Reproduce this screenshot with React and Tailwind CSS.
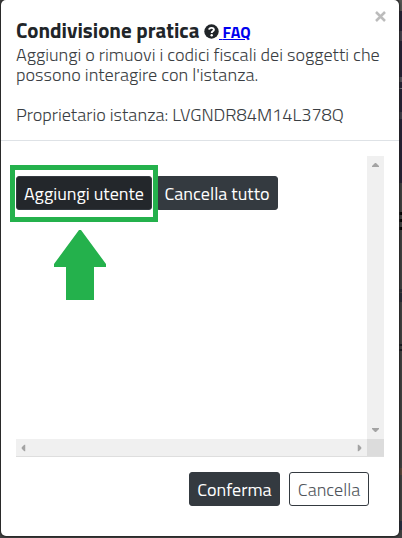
function Line({ children, className = '' }) {
  return <div className={'w-max text-[18.2px] leading-5 font-light whitespace-pre text-[#3a3e43] ' + className}>{children}</div>;
}

function Button({ children, className = '' }) {
  return (
    <button
      className={
        'flex h-[34px] shrink-0 items-center justify-center rounded-[3px] border border-[#343a40] pb-px text-[18.1px] leading-6 whitespace-nowrap ' +
        className
      }
    >
      {children}
    </button>
  );
}

function Triangle({ className = '' }) {
  return (
    <svg className={'h-1 w-[7px] fill-[#a3a3a3] ' + className} viewBox="0 0 7 4">
      <path d="M3 0h1L7 3v1H0V3z" />
    </svg>
  );
}

function Backdrop() {
  return (
    <div className="flex h-[538px] w-[4px] shrink-0 flex-col bg-[#414141]">
      <div className="h-[11px] bg-[#555653]" />
      <div className="h-[172px] bg-[#252135] pt-[20px]">
        <div className="h-[10px] w-[3px] bg-[#45424d]" />
        <div className="mt-[36px] h-[5px] bg-[#55535c]" />
        <div className="mt-[6px] h-px bg-[#77747c]" />
        <div className="mt-[23px] h-[7px] bg-[#403e48]" />
      </div>
      <div className="mt-[29px] h-[3px] bg-black" />
      <div className="mt-[4px] h-[3px] bg-black" />
      <div className="mt-[5px] h-[3px] bg-black" />
      <div className="mt-[59px] h-[3px] bg-[#292c35]" />
      <div className="mt-px h-[9px] bg-[#262a36]" />
      <div className="mt-[42px] h-[2px] bg-[#171920]" />
      <div className="mt-[3px] h-[2px] bg-[#171920]" />
      <div className="mt-[117px] h-[7px] w-[3px] bg-[#5b4639]" />
      <div className="mt-[46px] h-[9px] w-[3px] bg-[#242c42]" />
    </div>
  );
}

export default function App() {
  return (
    <div className="flex h-[538px] w-[402px] overflow-hidden bg-[#414141] font-['Titillium_Web','Open_Sans',sans-serif] text-[#212529]">
      <div className="relative ml-px flex h-[536px] w-[398px] shrink-0 flex-col rounded-[5px] bg-white shadow-[0_0_2px_1px_#222]">
        <header className="flex h-[141px] shrink-0 flex-col border-b border-[#dee2e6] pt-[19px] pl-[15px]">
          <div className="flex h-[24px] items-center">
            <h1 className="mb-0.5 w-[188px] shrink-0 text-[21px] leading-6 font-bold whitespace-nowrap">Condivisione pratica</h1>
            <svg className="mt-px h-[15px] w-[15px] shrink-0" viewBox="0 0 15 15">
              <circle cx="7.5" cy="7.5" r="7.2" fill="#212529" />
              <path d="M5.1 5.7C5.3 3.2 9.9 3.2 9.9 5.8C9.9 7.3 7.7 7.4 7.7 8.9" fill="none" stroke="white" strokeWidth="1.9" />
              <circle cx="7.7" cy="11.3" r="1.2" fill="white" />
            </svg>
            <a className="mt-px text-[16px] leading-6 font-bold whitespace-pre text-[#0000ee] underline">
              {' '}FAQ
            </a>
          </div>
          <Line className="mt-px">Aggiungi o rimuovi i codici fiscali dei soggetti che</Line>
          <Line>possono interagire con l'istanza.</Line>
          <Line className="mt-5">Proprietario istanza: LVGNDR84M14L378Q</Line>
        </header>

        <svg className="absolute top-[11px] left-[374px] h-[11px] w-[11px]" viewBox="0 0 11 11">
          <path d="M1 1L10 10M10 1L1 10" stroke="#bcbcbc" strokeWidth="2.5" />
        </svg>

        <main className="mt-[15px] ml-[15px] flex h-[301px] w-[368px] shrink-0 flex-col border-b border-[#dedede]">
          <div className="flex h-[283px] justify-between">
            <div className="flex gap-1 pt-5">
              <div className="relative h-[34px]">
                <Button className="w-[136px] bg-[#23272b] text-white">Aggiungi utente</Button>
                <div className="absolute -top-[11px] -left-[6px] z-10 h-[57px] w-[148px] border-[5px] border-[#24b14c]" />
                <svg className="absolute top-[54px] left-[38px] h-[70px] w-[52px]" viewBox="0 0 52 70">
                  <path d="M25 0h2l25 34v3H40v33H12V37H0v-3z" fill="#24b14c" />
                </svg>
              </div>
              <Button className="w-[122px] bg-[#343a40] text-white">Cancella tutto</Button>
            </div>
            <div className="flex w-[17px] flex-col items-center justify-between bg-[#f0f0f0] pt-[7px] pb-[7px]">
              <Triangle />
              <Triangle className="rotate-180" />
            </div>
          </div>
          <div className="flex h-[17px] bg-[#f0f0f0]">
            <div className="flex flex-1 items-center justify-between px-[4px]">
              <Triangle className="-rotate-90" />
              <Triangle className="rotate-90" />
            </div>
            <div className="w-[17px] bg-[#dcdcdc]" />
          </div>
        </main>

        <footer className="mt-[15px] flex gap-[9px] pl-[188px]">
          <Button className="w-[91px] bg-[#343a40] text-white">Conferma</Button>
          <Button className="w-[80px] bg-white font-light text-[#50555b]">Cancella</Button>
        </footer>
      </div>
      <Backdrop />
    </div>
  );
}
